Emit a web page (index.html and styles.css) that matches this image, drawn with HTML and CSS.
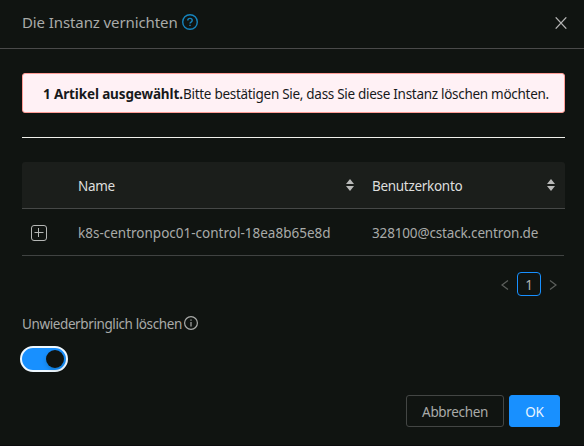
FILE: index.html
```html
<!DOCTYPE html>
<html lang="de">
<head>
<meta charset="utf-8">
<title>Die Instanz vernichten</title>
<link rel="stylesheet" href="styles.css">
</head>
<body>
<div class="modal">
  <header class="modal-header">
    <h1 class="title">Die Instanz vernichten</h1>
    <svg class="help" viewBox="0 0 16 16" width="16" height="16"><circle cx="8" cy="8" r="7.3"/><path d="M5.8 6.5C5.8 5.2 6.7 4.4 8 4.4s2.2.8 2.2 2c0 1.7-2.2 1.6-2.2 3.1"/><path d="M8 10.7v1.2"/></svg>
    <svg class="close" viewBox="0 0 12 12" width="12" height="12"><path d="M.7.4l10.6 11.2M11.3.4L.7 11.6"/></svg>
  </header>
  <main class="modal-body">
    <div class="alert"><b class="count">1 Artikel ausgewählt.</b><span class="message">Bitte bestätigen Sie, dass Sie diese Instanz löschen möchten.</span></div>
    <div class="divider"></div>
    <div class="table">
      <div class="row head">
        <span></span>
        <div class="cell"><span class="th-name">Name</span><svg class="sorter" viewBox="0 0 8 12" width="8" height="12"><path d="M4 0l4 5H0zM0 7h8l-4 5z"/></svg></div>
        <div class="cell"><span class="th-account">Benutzerkonto</span><svg class="sorter" viewBox="0 0 8 12" width="8" height="12"><path d="M4 0l4 5H0zM0 7h8l-4 5z"/></svg></div>
      </div>
      <div class="row data">
        <svg class="expand" viewBox="0 0 16 16" width="16" height="16"><rect x=".5" y=".5" width="15" height="15" rx="2.5"/><path d="M3.5 7.5h9M7.5 3v9"/></svg>
        <div class="cell"><span class="td-name">k8s-centronpoc01-control-18ea8b65e8d</span></div>
        <div class="cell"><span class="td-account">328100@cstack.centron.de</span></div>
      </div>
    </div>
    <nav class="pagination">
      <svg viewBox="0 0 8 10" width="8" height="10"><path d="M7 .5L1 5l6 4.500"/></svg>
      <span class="page">1</span>
      <svg viewBox="0 0 8 10" width="8" height="10"><path d="M1 .5L7 5 1 9.500"/></svg>
    </nav>
    <div class="label"><span class="expunge">Unwiederbringlich löschen</span><svg class="info" viewBox="0 0 14 14" width="14" height="14"><circle cx="7" cy="7" r="6.400"/><path d="M7 6v4.500M7 3.500v1.300"/></svg></div>
    <div class="switch"><span class="knob"></span></div>
    <footer class="actions">
      <div class="button"><span class="cancel">Abbrechen</span></div>
      <div class="button primary"><span class="ok">OK</span></div>
    </footer>
  </main>
</div>
</body>
</html>
```
FILE: styles.css
```css
* { box-sizing: border-box; }
body { margin: 0; background: #101411; color: #a9aba9; font: 13.5px/22px "Noto Sans", sans-serif; }
svg { display: block; flex: none; fill: none; stroke: currentColor; }
span, b, h1 { white-space: nowrap; }
.modal { height: 446px; border-bottom: 1px solid #0b0b0d; }
.modal-header { display: flex; align-items: center; height: 49px; padding: 0 17px 4px 22px; border-bottom: 1px solid #4a4a4a; }
.title { margin: 0; width: 160px; font-size: 15px; font-weight: 400; letter-spacing: -.1px; }
.help { color: #1684bd; stroke-width: 1.4; }
.close { margin-left: auto; color: #b5b5b5; margin-top: 2px; stroke-width: 1.3; }
.modal-body { padding: 24px 19px 0 22px; }
.alert { display: flex; align-items: center; height: 40px; padding: 2px 0 0 20px; border: 1px solid #ff9c96; border-radius: 3px; background: #fff1f5; color: #17191b; }
.count { width: 140px; letter-spacing: -.13px; }
.message { letter-spacing: -.29px; }
.divider { height: 1px; margin: 24px 0; background: #f0f0eb; }
.row { display: grid; grid-template-columns: 56px 294px 1fr; align-items: center; }
.head { height: 47px; background: #1b1e1b; border-bottom: 1px solid #464847; border-radius: 3px 3px 0 0; color: #dededd; }
.data { height: 47px; border-bottom: 1px solid #404342; margin: 0 1px 0 0; }
.cell { display: flex; align-items: center; justify-content: space-between; padding: 2px 10px 0 0; }
.sorter { fill: #b9bab9; stroke: none; margin-top: -3px; }
.head .cell:nth-child(2) .sorter { margin-right: 8px; }
.th-name { letter-spacing: -.3px; }
.th-account { letter-spacing: -.3px; }
.td-account { letter-spacing: -.15px; }
.expand { margin: 2px 0 0 9px; color: #b5b7b5; }
.pagination { display: flex; align-items: center; justify-content: flex-end; gap: 8px; height: 24px; margin-top: 16px; padding-right: 8px; color: #5c5f5c; }
.pagination svg { margin-top: 2px; stroke-width: 1.2; }
.page { width: 24px; height: 24px; border: 1px solid #1890ff; border-radius: 4px; color: #b0b2b0; text-align: center; line-height: 24px; }
.label { display: flex; align-items: center; height: 22px; margin-top: 17px; }
.expunge { width: 162px; letter-spacing: -.39px; }
.info { margin-top: -3px; stroke-width: 1.2; }
.switch { display: flex; align-items: center; justify-content: flex-end; width: 48px; height: 26px; margin: 11px 0 0 -2px; padding-right: 2px; border: 2px solid #eef8ff; border-radius: 13px; background: #1890ff; }
.knob { width: 18px; height: 18px; border-radius: 50%; background: #101411; box-shadow: 0 2px 4px #00230b33; }
.actions { display: flex; justify-content: flex-end; gap: 5px; margin: 23px 5px 0 0; }
.button { display: flex; align-items: center; justify-content: center; width: 98px; height: 32px; padding-top: 2px; border: 1px solid #434644; border-radius: 3px; }
.cancel { letter-spacing: -.35px; }
.ok { letter-spacing: -.3px; }
.primary { width: 51px; background: #1890ff; border-color: #1890ff; color: #e9f5ff; }
```
